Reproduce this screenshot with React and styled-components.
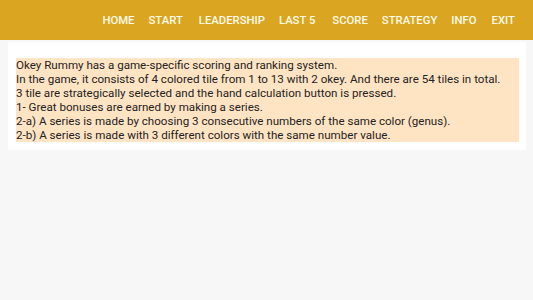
import React from 'react';
import styled, { createGlobalStyle } from 'styled-components';

const GlobalStyle = createGlobalStyle`
    body {
        margin: 0;
        background: #f7f7f7;
        font-family: Roboto, "Liberation Sans", sans-serif;
    }
`;

const Header = styled.header`
    height: 40px;
    background: #daa520;
    display: flex;
    align-items: center;
    justify-content: flex-end;
    padding-right: 18px;
    gap: 14px;
`;

const NavItem = styled.span`
    color: #fffbe8;
    font-size: 11.3px;
    font-weight: 500;
    text-transform: uppercase;
    white-space: nowrap;
    margin-left: ${p => p.extra || 0}px;
`;

const Card = styled.section`
    margin: 2px 7px 0 8px;
    background: #ffffff;
    padding: 16px 7px 8px 8px;
`;

const Info = styled.div`
    background: #ffe4c4;
    color: #222;
    font-size: 11.6px;
    line-height: 14px;
`;

const Line = styled.div`
    white-space: nowrap;
`;

const NAV = [
    ['Home', 0], ['Start', 0], ['Leadership', 2], ['Last 5', 0],
    ['Score', 3], ['Strategy', 0], ['Info', 0], ['Exit', 1],
];

const LINES = [
    'Okey Rummy has a game-specific scoring and ranking system.',
    'In the game, it consists of 4 colored tile from 1 to 13 with 2 okey. And there are 54 tiles in total.',
    '3 tile are strategically selected and the hand calculation button is pressed.',
    '1- Great bonuses are earned by making a series.',
    '2-a) A series is made by choosing 3 consecutive numbers of the same color (genus).',
    '2-b) A series is made with 3 different colors with the same number value.',
];

export default function App() {
    return (
        <>
            <GlobalStyle />
            <Header>
                {NAV.map(([label, extra]) => (
                    <NavItem key={label} extra={extra}>{label}</NavItem>
                ))}
            </Header>
            <Card>
                <Info>
                    {LINES.map(l => <Line key={l}>{l}</Line>)}
                </Info>
            </Card>
        </>
    );
}
